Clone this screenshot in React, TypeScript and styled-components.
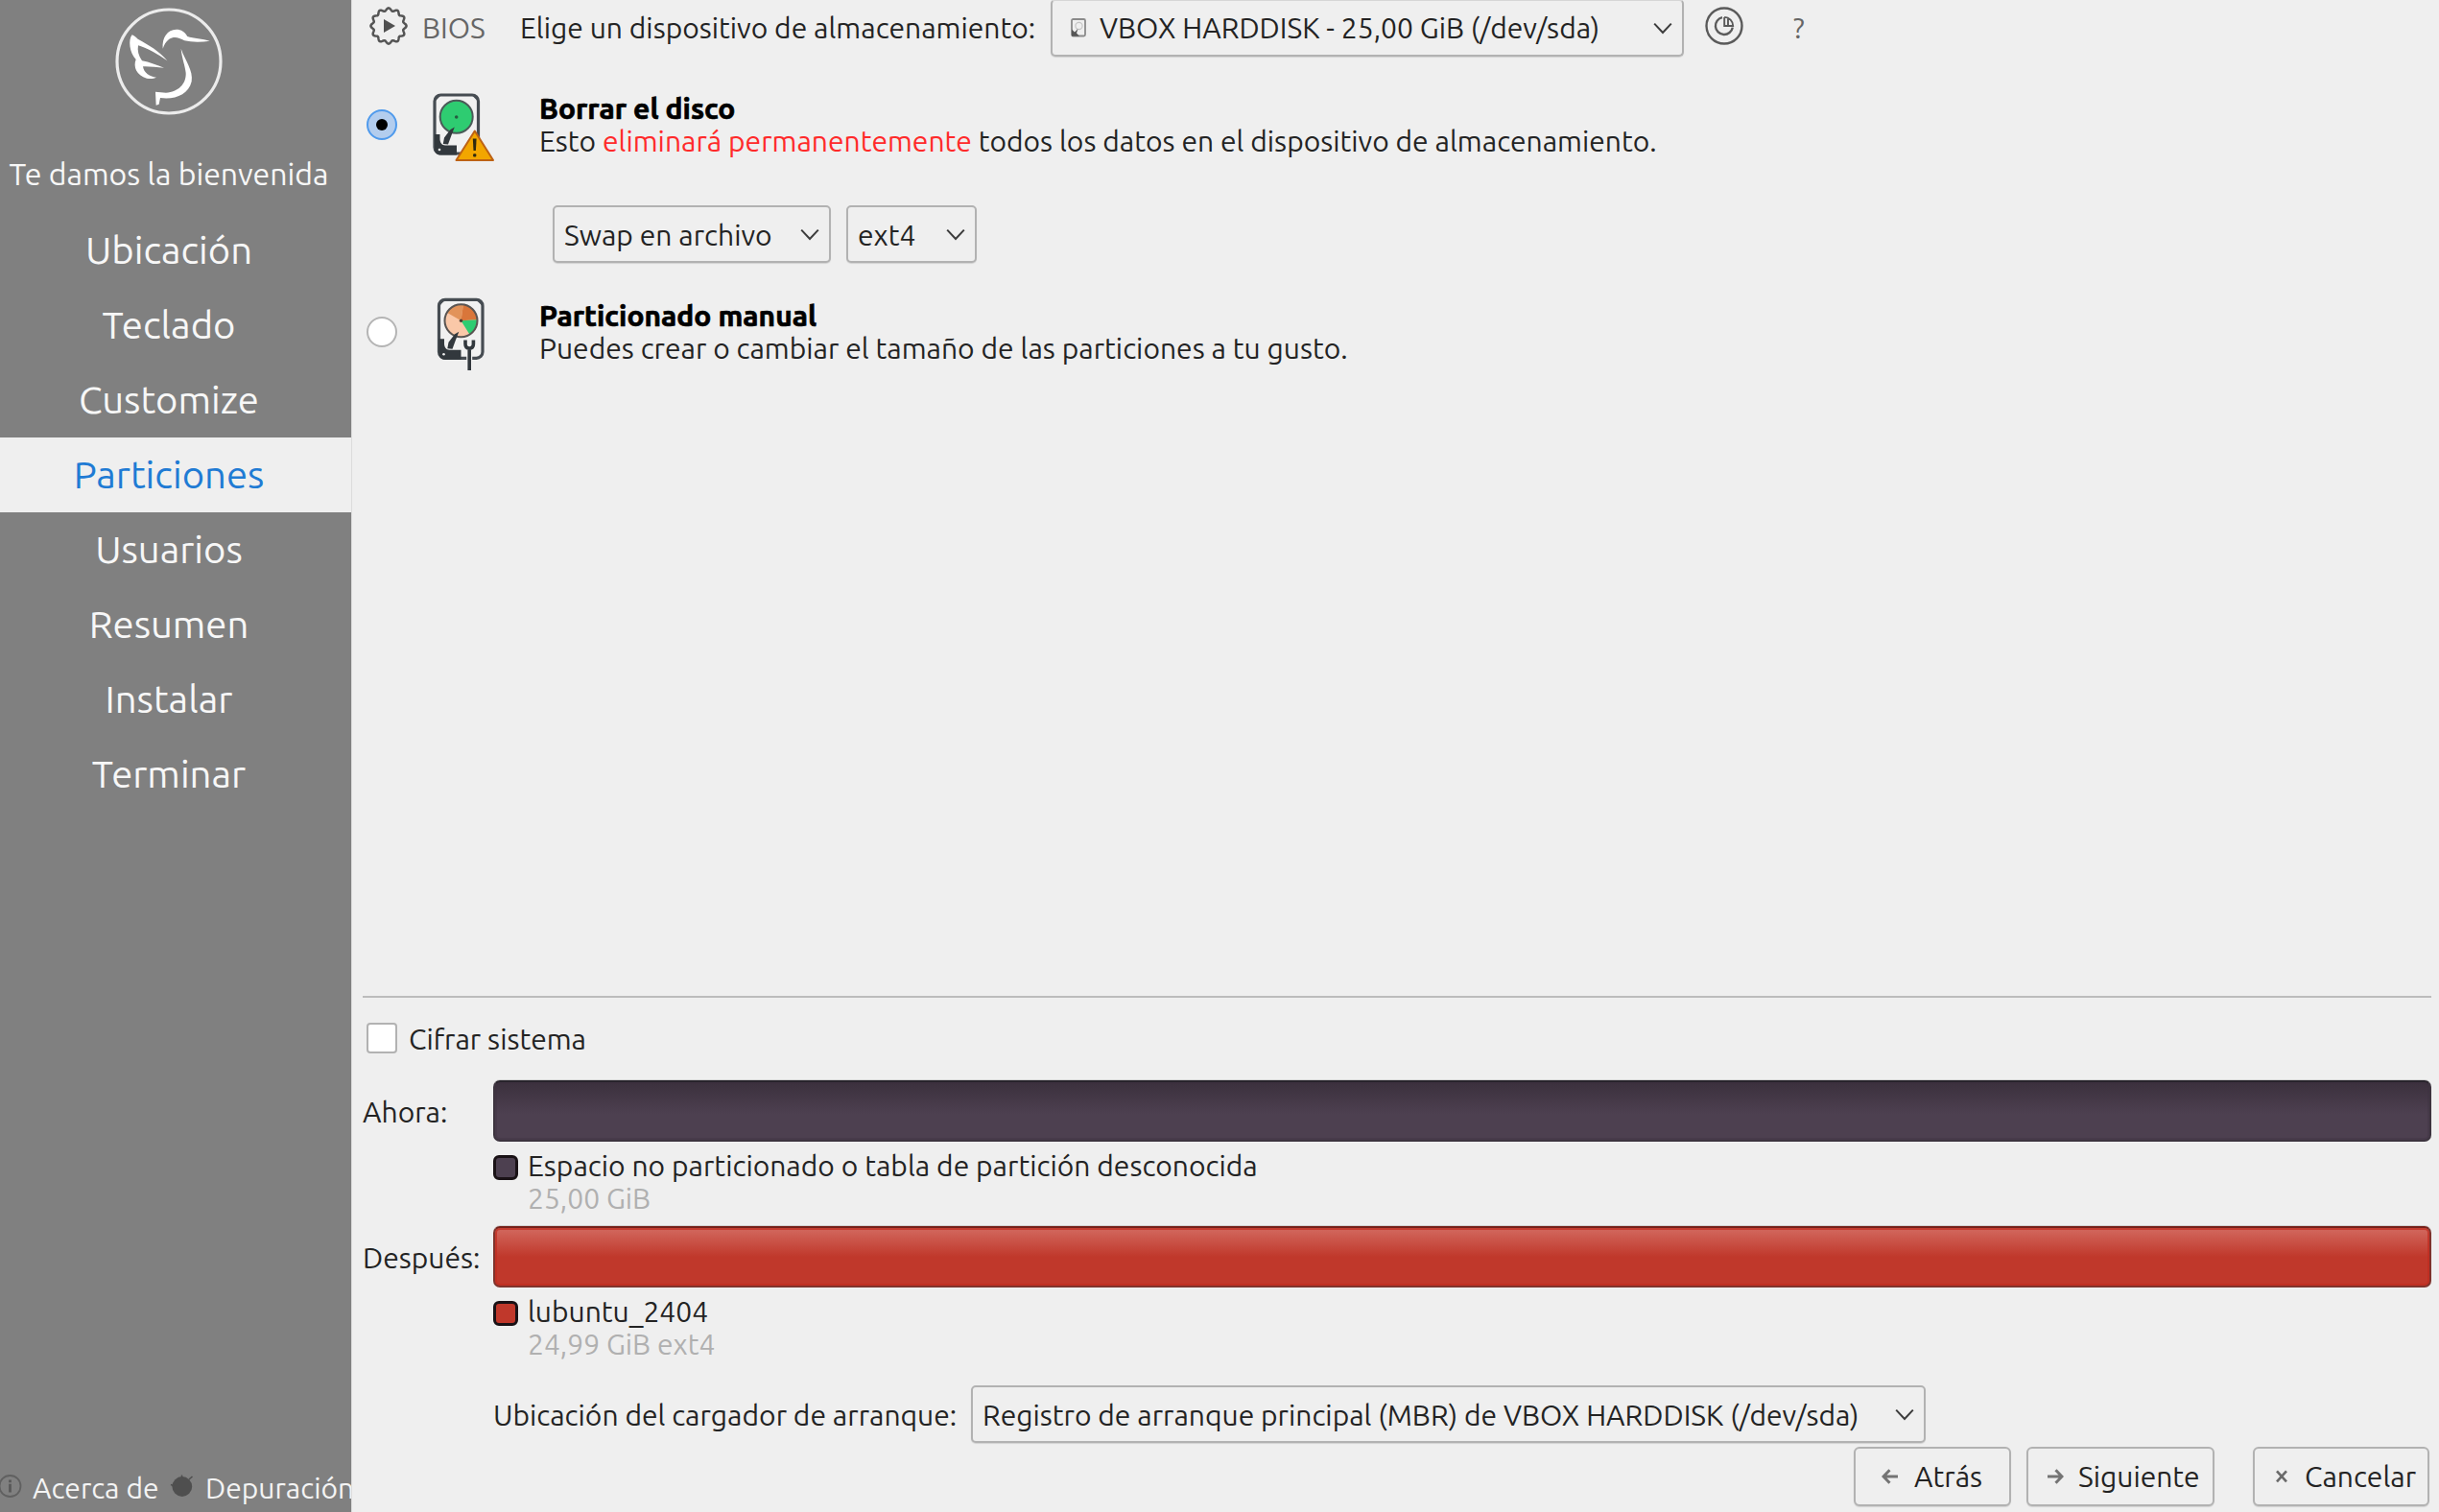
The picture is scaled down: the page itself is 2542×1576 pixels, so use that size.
import React from "react";
import styled, { createGlobalStyle } from "styled-components";

const Global = createGlobalStyle`
  *, *::before, *::after { box-sizing: border-box; }
  html, body { margin: 0; padding: 0; background: #efefef; overflow: hidden; }
  svg { display: block; flex: none; }
`;

/* ---------- text ---------- */

const Text = styled.span<{ $color?: string; $indent?: number; $drop?: number }>`
  display: inline-block;
  font-size: 30px;
  line-height: 34px;
  white-space: pre;
  color: ${(p) => p.$color ?? "#232323"};
  padding-left: ${(p) => p.$indent ?? 0}px;
  padding-top: ${(p) => p.$drop ?? 0}px;
`;

const Title = styled(Text)`
  font-weight: 700;
  color: #000;
  -webkit-text-stroke: 0.7px #000;
`;

const Danger = styled.span`
  color: #ff2a2a;
`;

/* ---------- frame ---------- */

const Window = styled.div`
  display: flex;
  width: 2542px;
  height: 1576px;
  background: #efefef;
  font-family: Ubuntu, "Noto Sans", "Open Sans", sans-serif;
`;

const Sidebar = styled.aside`
  display: flex;
  flex-direction: column;
  flex: none;
  width: 366px;
  background: #808080;
`;

const LogoBox = styled.div`
  height: 144px;
  width: 352px;
  display: flex;
  justify-content: center;
  padding-top: 4px;
`;

const Step = styled.div<{ $active?: boolean; $small?: boolean }>`
  height: 78px;
  padding-right: 14px;
  text-align: center;
  white-space: nowrap;
  font-size: ${(p) => (p.$small ? 32 : 40)}px;
  line-height: ${(p) => (p.$small ? 75 : 77)}px;
  color: ${(p) => (p.$active ? "#1f7bd4" : "#f7f7f7")};
  background: ${(p) => (p.$active ? "#efefef" : "transparent")};
`;

const SidebarFooter = styled.div`
  display: grid;
  grid-template-columns: 34px 143px 37px auto;
  align-items: center;
  height: 51px;
  margin-top: auto;
`;

const FooterIcon = styled.div`
  padding-bottom: 3px;
`;

const Main = styled.main`
  display: flex;
  flex-direction: column;
  flex: 1;
  padding: 0 8px 6px 11px;
  border-left: 1px solid #dcdcdc;
`;

/* ---------- controls ---------- */

const Combo = styled.div<{ $w: number; $flushTop?: boolean }>`
  display: flex;
  align-items: center;
  justify-content: space-between;
  width: ${(p) => p.$w}px;
  height: 60px;
  padding: 0 10px;
  border: 2px solid #b2b2b2;
  border-top-color: ${(p) => (p.$flushTop ? "#d6d6d6" : "#b2b2b2")};
  border-radius: 5px;
  background: #efefef;
  box-shadow: 0 1px 1px rgba(0, 0, 0, 0.12);
`;

const ComboValue = styled.div`
  display: flex;
  align-items: center;
  gap: 14px;
  padding-left: 9px;
`;

const Button = styled.button<{ $w: number; $pad: number; $gap: number; $apart?: boolean }>`
  display: flex;
  align-items: center;
  width: ${(p) => p.$w}px;
  height: 62px;
  margin: 0 0 0 ${(p) => (p.$apart ? 24 : 0)}px;
  padding: 0 0 0 ${(p) => p.$pad}px;
  gap: ${(p) => p.$gap}px;
  border: 2px solid #b2b2b2;
  border-radius: 6px;
  background: #efefef;
  box-shadow: 0 1px 1px rgba(0, 0, 0, 0.12);
  font-family: inherit;
`;

const Radio = styled.span<{ $on?: boolean }>`
  display: flex;
  align-items: center;
  justify-content: center;
  width: 32px;
  height: 32px;
  margin-left: 4px;
  border-radius: 50%;
  border: 2px solid ${(p) => (p.$on ? "#4f9aec" : "#b4b4b4")};
  background: ${(p) => (p.$on ? "#b3cdee" : "#ffffff")};
  &::after {
    content: "";
    width: 12px;
    height: 12px;
    border-radius: 50%;
    background: ${(p) => (p.$on ? "#000000" : "transparent")};
  }
`;

const CheckBox = styled.span`
  width: 32px;
  height: 32px;
  border: 2px solid #b2b2b2;
  border-radius: 4px;
  background: #ffffff;
`;

/* ---------- main sections ---------- */

const Toolbar = styled.div`
  display: grid;
  grid-template-columns: 62px 102px 553px 660px 84px 72px;
  grid-template-rows: 58px;
  align-items: center;
  height: 58px;
`;

const ToolIcon = styled.div<{ $pad?: number; $center?: boolean }>`
  display: flex;
  justify-content: ${(p) => (p.$center ? "center" : "flex-start")};
  padding: 0 0 4px ${(p) => p.$pad ?? 0}px;
`;

const Option = styled.div<{ $gap: number }>`
  display: grid;
  grid-template-columns: 66px 118px 1fr;
  grid-template-rows: 68px;
  align-items: center;
  height: 68px;
  margin-top: ${(p) => p.$gap}px;
`;

const OptionText = styled.div`
  display: flex;
  flex-direction: column;
  align-items: flex-start;
`;

const ComboRow = styled.div`
  display: flex;
  gap: 16px;
  margin-top: 50px;
  padding-left: 198px;
`;

const Bottom = styled.section`
  display: flex;
  flex-direction: column;
  margin-top: auto;
`;

const Rule = styled.div`
  height: 2px;
  background: #bcbcbc;
`;

const CheckRow = styled.label`
  display: flex;
  align-items: center;
  gap: 12px;
  height: 32px;
  margin: 26px 0 28px;
  padding-left: 4px;
`;

const Preview = styled.div`
  display: grid;
  grid-template-columns: 136px 1fr;
  align-items: center;
`;

const DiskBar = styled.div<{ $kind: "free" | "root" }>`
  height: 64px;
  border-radius: 7px;
  border: 2px solid ${(p) => (p.$kind === "free" ? "#3d343f" : "#80332c")};
  border-top-color: ${(p) => (p.$kind === "free" ? "#28232b" : "#75211a")};
  background: ${(p) =>
    p.$kind === "free"
      ? "linear-gradient(#3b303d 0%, #4d4050 55%, #4d4050 100%)"
      : "linear-gradient(#d2695f 0%, #c0382b 50%, #c0382b 100%)"};
  box-shadow: inset 0 0 0 2px ${(p) => (p.$kind === "free" ? "rgba(60, 48, 62, 0.35)" : "rgba(192, 44, 32, 0.75)")},
    0 -1px 0 rgba(0, 0, 0, 0.12);
`;

const Legend = styled.div<{ $after: number }>`
  display: grid;
  grid-template-columns: 36px 1fr;
  grid-column: 2;
  margin: 8px 0 ${(p) => p.$after}px;
`;

const Swatch = styled.span<{ $fill: string }>`
  width: 26px;
  height: 26px;
  margin-top: 6px;
  border: 3px solid #1a1216;
  border-radius: 6px;
  background: ${(p) => p.$fill};
`;

const LegendText = styled.div`
  display: flex;
  flex-direction: column;
  align-items: flex-start;
`;

const BootRow = styled.div`
  display: grid;
  grid-template-columns: 498px auto;
  justify-content: start;
  align-items: center;
  height: 60px;
  padding-left: 136px;
`;

const Actions = styled.div`
  display: flex;
  justify-content: flex-end;
  gap: 16px;
  margin-top: 4px;
  padding-right: 2px;
`;

/* ---------- icons ---------- */

const Chevron = () => (
  <svg width="20" height="14" viewBox="0 0 20 14">
    <path d="M1.2 2.6L10 12L18.8 2.6" fill="none" stroke="#3c3c3c" strokeWidth="2" />
  </svg>
);

const Logo = () => (
  <svg width="120" height="120" viewBox="349 12 360 360">
    <circle cx="529" cy="192" r="162" fill="none" stroke="#ececec" strokeWidth="9.5" />
    <g fill="#fff">
      <path d="M510 152C507 116 525 93 552 92C568 92 580 100 587 114C605 120 635 122 657 128C630 132 600 132 578 127C560 117 545 113 530 122C519 130 514 140 510 152Z" />
      <path d="M414 109C401 125 406 165 426 186C417 208 427 236 460 245C472 247 482 246 490 242C470 240 450 228 448 208C465 207 490 210 514 212C492 204 468 194 445 190C434 174 430 158 433 142C462 150 495 170 524 190C500 160 465 140 432 122C426 116 420 112 414 109Z" />
      <path d="M567 152C570 185 580 205 582 228C584 262 558 288 520 290L487 287L489 329L498 326L502 306C547 312 590 297 600 255C606 220 580 190 567 152Z" />
    </g>
  </svg>
);

const gearPath = (() => {
  let d = "";
  for (let i = 0; i <= 144; i++) {
    const a = (i / 144) * Math.PI * 2;
    const r = 17.2 + 1.4 * Math.cos(12 * a);
    d += `${i ? "L" : "M"}${(21 + r * Math.sin(a)).toFixed(2)} ${(21 - r * Math.cos(a)).toFixed(2)}`;
  }
  return d + "Z";
})();

const GearPlay = () => (
  <svg width="42" height="42" viewBox="0 0 42 42">
    <path d={gearPath} fill="none" stroke="#555" strokeWidth="2.5" />
    <path d="M16 14L28 21L16 28Z" fill="#505050" />
  </svg>
);

const PartitionChart = () => (
  <svg width="42" height="42" viewBox="0 0 42 42">
    <circle cx="21" cy="21" r="18.5" fill="none" stroke="#5a5a5a" strokeWidth="2.4" />
    <path d="M19 12.2A9 9 0 1 0 29.8 22.6" fill="none" stroke="#5a5a5a" strokeWidth="2.4" />
    <path d="M21.2 11.9V21H30.2A9 9 0 0 0 21.2 11.9M25 13.5V20.5" fill="none" stroke="#5a5a5a" strokeWidth="1.9" />
  </svg>
);

const DriveSmall = () => (
  <svg width="16" height="20" viewBox="0 0 16 20">
    <rect x="1" y="1" width="14" height="17.5" rx="1.5" fill="none" stroke="#8a8a8a" strokeWidth="1.8" />
    <circle cx="8.5" cy="8" r="3.6" fill="none" stroke="#c4c4c4" strokeWidth="1.2" />
    <path d="M1 11.5L4 14.5L7.5 11L6 15.5L9 18.8H1Z" fill="#555" />
  </svg>
);

const DriveShell = () => (
  <>
    <rect x="9" y="9" width="45.5" height="61" rx="6.5" fill="#f1f1f1" stroke="#464c52" strokeWidth="3.2" />
    <g fill="#464c52">
      <path d="M10 15V10H15Z" />
      <path d="M48.5 10H53.5V15Z" />
    </g>
  </>
);

const DriveHead = () => (
  <path
    d="M9 50H14.5V55.5C15 59.5 16.5 61 20 61.5H32V71.5H15C11 71.5 9 69 9 65ZM29.8 42.5L25.5 45L19 53.5L17.8 60L23 60.5L26.3 51.5Z"
    fill="#32383d"
  />
);

const DriveErase = () => (
  <svg width="80" height="80" viewBox="0 0 80 80">
    <DriveShell />
    <circle cx="31.7" cy="31.7" r="17" fill="#2ecc71" stroke="#4b5a58" strokeWidth="2" />
    <circle cx="31.7" cy="32" r="1.8" fill="#255c40" />
    <DriveHead />
    <circle cx="14" cy="66" r="1.3" fill="#eee" />
    <path d="M50.8 46.5L70 77H31.5Z" fill="#f2a600" stroke="#bd6214" strokeWidth="2" strokeLinejoin="round" />
    <path d="M48.8 54.5H52.6L51.9 67H49.5Z" fill="#2e2a10" />
    <rect x="49.1" y="70.2" width="3.2" height="3.2" rx="1" fill="#2e2a10" />
  </svg>
);

const DriveManual = () => (
  <svg width="80" height="80" viewBox="0 0 80 80" overflow="visible">
    <g transform="translate(4.5 -2.7)">
      <DriveShell />
      <circle cx="32" cy="31" r="17" fill="#fac8a8" />
      <path d="M32 31L17.3 22.5A17 17 0 0 1 34.4 14.2Z" fill="#e2935a" />
      <path d="M32 31L34.4 14.2A17 17 0 0 1 49 30Z" fill="#d9763a" />
      <path d="M32 31L49 30A17 17 0 0 1 41 45.4Z" fill="#2ecc71" />
      <circle cx="32" cy="31" r="17" fill="none" stroke="#5a5552" strokeWidth="2" />
      <circle cx="32" cy="31" r="1.7" fill="#4a3a30" />
      <DriveHead />
      <circle cx="14" cy="66" r="1.3" fill="#eee" />
    </g>
    <path d="M40.7 48.5V52.5Q41 57 45 57Q49 57 49.7 52.5V48.5M45.2 57V80" fill="none" stroke="#f1f1f1" strokeWidth="6" />
    <path d="M41 48.5V52.5Q41 57 45.2 57Q49.4 57 49.4 52.5V48.5M45.2 57V80" fill="none" stroke="#32383d" strokeWidth="3.6" />
  </svg>
);

const ArrowIcon = ({ flip }: { flip?: boolean }) => (
  <svg width="18" height="18" viewBox="0 0 18 18">
    <path
      d="M17 9H2M8.5 2.2L2 9L8.5 15.8"
      transform={flip ? "translate(18 0) scale(-1 1)" : undefined}
      fill="none"
      stroke="#747474"
      strokeWidth="3"
    />
  </svg>
);

const CrossIcon = () => (
  <svg width="18" height="18" viewBox="0 0 18 18">
    <path d="M4 3.4L14 14.4M14 3.4L4 14.4" fill="none" stroke="#6a6a6a" strokeWidth="2.6" />
  </svg>
);

const InfoIcon = () => (
  <svg width="24" height="24" viewBox="0 0 24 24">
    <circle cx="10.5" cy="12" r="11" fill="none" stroke="#606060" strokeWidth="1.8" />
    <path d="M10.5 5.5V8.3M10.5 9.8V18.5" stroke="#585858" strokeWidth="2.8" />
  </svg>
);

const BugIcon = () => (
  <svg width="28" height="26" viewBox="0 0 28 26">
    <circle cx="12.8" cy="13.5" r="10.4" fill="#4f4f4f" />
    <path d="M12.5 1.5V5M1 11.5L5 13M20 6L23.5 3" stroke="#4f4f4f" strokeWidth="1.6" />
  </svg>
);

/* ---------- data ---------- */

const steps = [
  { label: "Te damos la bienvenida", small: true },
  { label: "Ubicación" },
  { label: "Teclado" },
  { label: "Customize" },
  { label: "Particiones", active: true },
  { label: "Usuarios" },
  { label: "Resumen" },
  { label: "Instalar" },
  { label: "Terminar" },
];

export default function App() {
  return (
    <Window>
      <Global />
      <Sidebar>
        <LogoBox>
          <Logo />
        </LogoBox>
        {steps.map((s) => (
          <Step key={s.label} $small={s.small} $active={s.active}>
            {s.label}
          </Step>
        ))}
        <SidebarFooter>
          <FooterIcon>
            <InfoIcon />
          </FooterIcon>
          <Text $color="#f4f4f4">Acerca de</Text>
          <FooterIcon>
            <BugIcon />
          </FooterIcon>
          <Text $color="#f4f4f4">Depuración</Text>
        </SidebarFooter>
      </Sidebar>

      <Main>
        <Toolbar>
          <ToolIcon $pad={6}>
            <GearPlay />
          </ToolIcon>
          <Text $color="#666">BIOS</Text>
          <Text>Elige un dispositivo de almacenamiento:</Text>
          <Combo $w={660} $flushTop>
            <ComboValue>
              <DriveSmall />
              <Text>VBOX HARDDISK - 25,00 GiB (/dev/sda)</Text>
            </ComboValue>
            <Chevron />
          </Combo>
          <ToolIcon $center>
            <PartitionChart />
          </ToolIcon>
          <Text $color="#666" $indent={30}>?</Text>
        </Toolbar>

        <Option $gap={38}>
          <Radio $on />
          <DriveErase />
          <OptionText>
            <Title>Borrar el disco</Title>
            <Text>
              Esto <Danger>eliminará permanentemente</Danger> todos los datos en el dispositivo de almacenamiento.
            </Text>
          </OptionText>
        </Option>
        <ComboRow>
          <Combo $w={290}>
            <Text $drop={2}>Swap en archivo</Text>
            <Chevron />
          </Combo>
          <Combo $w={136}>
            <Text $drop={2}>ext4</Text>
            <Chevron />
          </Combo>
        </ComboRow>
        <Option $gap={38}>
          <Radio />
          <DriveManual />
          <OptionText>
            <Title>Particionado manual</Title>
            <Text>Puedes crear o cambiar el tamaño de las particiones a tu gusto.</Text>
          </OptionText>
        </Option>

        <Bottom>
          <Rule />
          <CheckRow>
            <CheckBox />
            <Text $drop={2}>Cifrar sistema</Text>
          </CheckRow>
          <Preview>
            <Text $drop={2}>Ahora:</Text>
            <DiskBar $kind="free" />
            <Legend $after={12}>
              <Swatch $fill="#4d4050" />
              <LegendText>
                <Text>Espacio no particionado o tabla de partición desconocida</Text>
                <Text $color="#b0b0b0">25,00 GiB</Text>
              </LegendText>
            </Legend>
            <Text $drop={2}>Después:</Text>
            <DiskBar $kind="root" />
            <Legend $after={26}>
              <Swatch $fill="#c0382b" />
              <LegendText>
                <Text>lubuntu_2404</Text>
                <Text $color="#b0b0b0">24,99 GiB ext4</Text>
              </LegendText>
            </Legend>
          </Preview>
          <BootRow>
            <Text $drop={2}>Ubicación del cargador de arranque:</Text>
            <Combo $w={995}>
              <Text $drop={2}>Registro de arranque principal (MBR) de VBOX HARDDISK (/dev/sda)</Text>
              <Chevron />
            </Combo>
          </BootRow>
          <Actions>
            <Button $w={164} $pad={27} $gap={16}>
              <ArrowIcon />
              <Text>Atrás</Text>
            </Button>
            <Button $w={196} $pad={19} $gap={15}>
              <ArrowIcon flip />
              <Text>Siguiente</Text>
            </Button>
            <Button $w={184} $pad={19} $gap={15} $apart>
              <CrossIcon />
              <Text>Cancelar</Text>
            </Button>
          </Actions>
        </Bottom>
      </Main>
    </Window>
  );
}
